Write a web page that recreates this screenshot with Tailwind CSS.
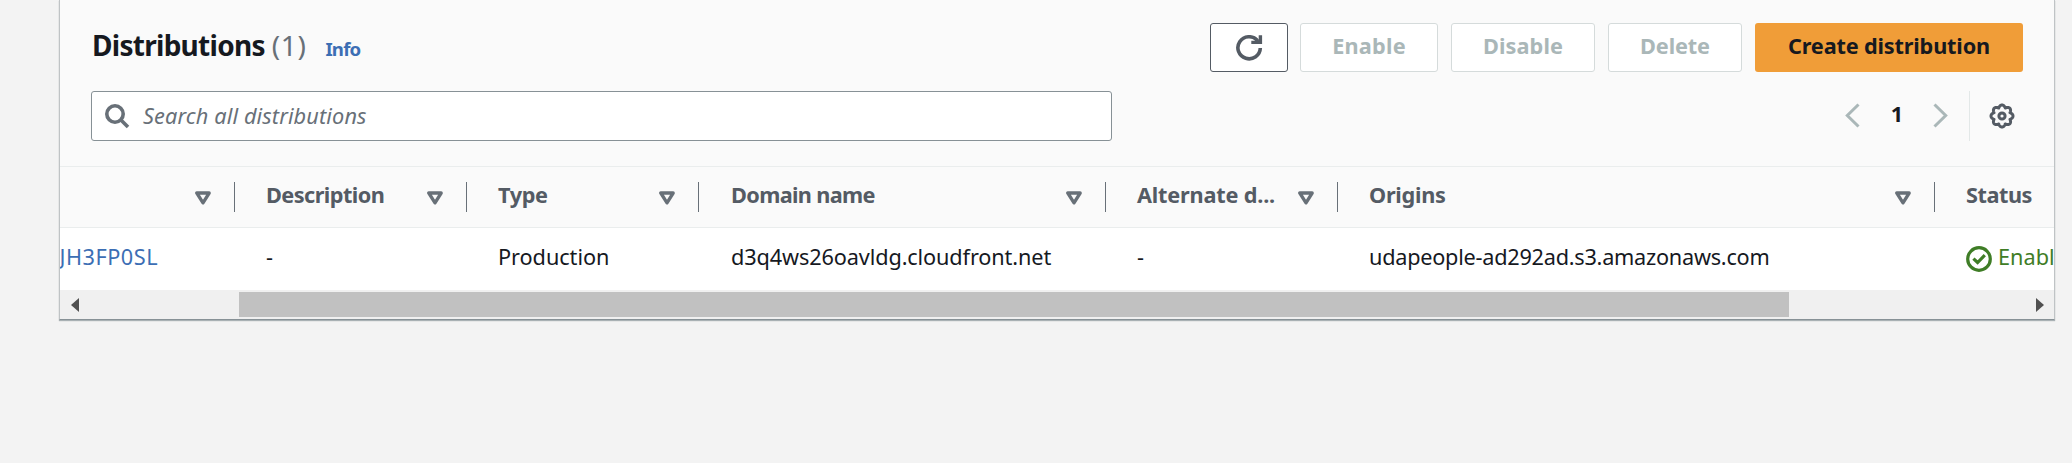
<!DOCTYPE html>
<html lang="en">
<head>
<meta charset="utf-8">
<title>Distributions</title>
<script src="https://cdn.jsdelivr.net/npm/@tailwindcss/browser@4"></script>
</head>
<body class="h-[463px] overflow-hidden bg-[#f3f3f3] font-['Noto_Sans','Open_Sans',sans-serif] text-[21.7px] leading-[30px] text-[#16191f]">
<svg class="hidden">
  <symbol id="sort" viewBox="0 0 16 14"><path d="M1.8 2h12.4L8 11.8z" fill="none" stroke="#687078" stroke-width="3.3" stroke-linejoin="round"/></symbol>
</svg>
<main class="ml-[59px] h-[320px] w-[1996px] border-x border-b border-[#bfc3c5] border-b-[#879196] bg-[#fafafa] shadow-[0_1px_1px_0_rgba(0,28,36,0.3)]">
  <header class="flex h-[167px] flex-col border-b border-[#eaeded] pt-[23px] pr-[31px] pl-[31px]">
    <div class="flex h-[49px] items-start justify-between">
      <h1 class="flex items-baseline pt-[4px] pl-px whitespace-nowrap leading-[36px]">
        <span class="text-[28px] font-bold tracking-[-0.72px]">Distributions</span>
        <span class="ml-[7px] text-[28px] tracking-[0.6px] text-[#687078]">(1)</span>
        <a class="ml-[19px] text-[18.6px] font-bold tracking-[-0.8px] text-[#3c6eb4]">Info</a>
      </h1>
      <div class="flex h-[49px] font-bold text-[#aab7b8]">
        <button class="mr-[12px] flex w-[78px] items-center justify-center rounded-[3px] border border-[#545b64] bg-white">
          <svg class="h-[26px] w-[28px]" viewBox="0 0 28 26" fill="none" stroke="#545b64" stroke-width="3.6"><path d="M25.3 13A11.2 11 0 1 1 22.6 5.6"/><path d="M25.4 0.3V7.4H16.3" stroke-width="3.4"/><path d="M19.5 3.2L23.7 7.2" stroke-width="3"/></svg>
        </button>
        <button class="mr-[13px] flex w-[138px] items-center justify-center rounded-[3px] border border-[#d5dbdb] bg-white pb-1 tracking-[0.22px]">Enable</button>
        <button class="mr-[13px] flex w-[144px] items-center justify-center rounded-[3px] border border-[#d5dbdb] bg-white pb-1 tracking-[0.1px]">Disable</button>
        <button class="mr-[13px] flex w-[134px] items-center justify-center rounded-[3px] border border-[#d5dbdb] bg-white pb-1 tracking-[-0.13px]">Delete</button>
        <button class="flex w-[268px] items-center justify-center rounded-[3px] bg-[#f09d38] pb-1 tracking-[-0.17px] text-[#16191f]">Create distribution</button>
      </div>
    </div>
    <div class="mt-[19px] flex h-[50px] justify-between">
      <div class="flex w-[1021px] items-center rounded-[3px] border border-[#879196] bg-white pl-[13px]">
        <svg class="h-[25px] w-[25px]" viewBox="0 0 25 25" fill="none" stroke="#687078" stroke-width="3.6"><circle cx="10" cy="10" r="8.2"/><path d="M15.7 15.7L23 23"/></svg>
        <span class="ml-[13px] tracking-[0.13px] text-[#687078] italic">Search all distributions</span>
      </div>
      <div class="flex items-center">
        <svg class="mb-px h-[25px] w-[15px]" viewBox="0 0 15 25" fill="none" stroke="#aab7b8" stroke-width="3"><path d="M13.5 1.5L2.3 12.5L13.5 23.5"/></svg>
        <span class="w-[73px] pb-1 pl-px text-center font-bold">1</span>
        <svg class="mb-px h-[25px] w-[15px]" viewBox="0 0 15 25" fill="none" stroke="#aab7b8" stroke-width="3"><path d="M1.5 1.5L12.7 12.5L1.5 23.5"/></svg>
        <span class="ml-[21px] h-[50px] w-px bg-[#e3e8e8]"></span>
        <svg class="mr-[8px] mb-px ml-[19px] h-[26px] w-[26px]" viewBox="-13 -13 26 26" fill="none" stroke="#545b64"><path stroke-width="3" stroke-linejoin="round" id="gear" d=""/><circle r="3.1" stroke-width="3"/></svg>
      </div>
    </div>
  </header>
  <div class="overflow-hidden">
    <div class="grid h-[61px] w-[2200px] grid-cols-[175px_232px_232px_407px_232px_597px_300px] items-center border-b border-[#eaeded] font-bold whitespace-nowrap text-[#545b64]">
      <div class="flex h-[30px] items-center justify-end border-r border-[#687078] pr-[23px]"><svg class="mt-[2px] h-[14px] w-[16px]"><use href="#sort"/></svg></div>
      <div class="flex h-[30px] items-center justify-between border-r border-[#687078] pr-[23px] pl-[31px]"><span class="pb-[5px] tracking-[-0.55px]">Description</span><svg class="mt-[2px] h-[14px] w-[16px]"><use href="#sort"/></svg></div>
      <div class="flex h-[30px] items-center justify-between border-r border-[#687078] pr-[23px] pl-[31px]"><span class="pb-[5px] tracking-[-0.4px]">Type</span><svg class="mt-[2px] h-[14px] w-[16px]"><use href="#sort"/></svg></div>
      <div class="flex h-[30px] items-center justify-between border-r border-[#687078] pr-[23px] pl-[32px]"><span class="pb-[5px] tracking-[-0.65px]">Domain name</span><svg class="mt-[2px] h-[14px] w-[16px]"><use href="#sort"/></svg></div>
      <div class="flex h-[30px] items-center justify-between border-r border-[#687078] pr-[23px] pl-[31px]"><span class="pb-[5px] tracking-[-0.19px]">Alternate d...</span><svg class="mt-[2px] h-[14px] w-[16px]"><use href="#sort"/></svg></div>
      <div class="flex h-[30px] items-center justify-between border-r border-[#687078] pr-[23px] pl-[31px]"><span class="pb-[5px] tracking-[-0.27px]">Origins</span><svg class="mt-[2px] h-[14px] w-[16px]"><use href="#sort"/></svg></div>
      <div class="flex h-[30px] items-center pl-[31px]"><span class="pb-[5px] tracking-[-0.47px]">Status</span></div>
    </div>
    <div class="grid h-[62px] w-[2200px] grid-cols-[175px_232px_232px_407px_232px_597px_300px] items-center bg-white pb-[5px] whitespace-nowrap">
      <div class="flex justify-end pr-[77px] tracking-[0.5px] text-[#3c6eb4]">JH3FP0SL</div>
      <div class="pl-[31px]">-</div>
      <div class="pl-[31px] tracking-[-0.05px]">Production</div>
      <div class="pl-[32px] tracking-[-0.12px]">d3q4ws26oavldg.cloudfront.net</div>
      <div class="pl-[31px]">-</div>
      <div class="pl-[31px] tracking-[-0.25px]">udapeople-ad292ad.s3.amazonaws.com</div>
      <div class="flex items-center pl-[31px] text-[#3f7d26]"><svg class="mt-[5px] mr-[6px] h-[26px] w-[26px]" viewBox="0 0 26 26" fill="none" stroke="#3f7d26" stroke-width="3.2"><circle cx="13" cy="13" r="11.3"/><path d="M7.4 12.6L11.6 16.5L18.8 9.2"/></svg>Enabled</div>
    </div>
  </div>
  <div class="flex h-[29px] items-center bg-[#f0f0f0]">
    <svg class="ml-[11px] h-[14px] w-[8px]" viewBox="0 0 8 14"><path d="M8 0V14L0 7z" fill="#505050"/></svg>
    <div class="ml-[160px] h-[25px] w-[1550px] bg-[#c1c1c1]"></div>
    <svg class="ml-[247px] h-[14px] w-[8px]" viewBox="0 0 8 14"><path d="M0 0V14L8 7z" fill="#505050"/></svg>
  </div>
</main>
<script>
  // Eight-lobed outline of the settings gear
  let d = "";
  for (let i = 0; i <= 160; i++) {
    const a = (i / 160) * 2 * Math.PI, r = 8.6 + 2.4 * Math.abs(Math.cos(4 * a));
    d += (i ? "L" : "M") + (r * Math.sin(a)).toFixed(2) + " " + (-r * Math.cos(a)).toFixed(2);
  }
  document.getElementById("gear").setAttribute("d", d + "z");
</script>
</body>
</html>
